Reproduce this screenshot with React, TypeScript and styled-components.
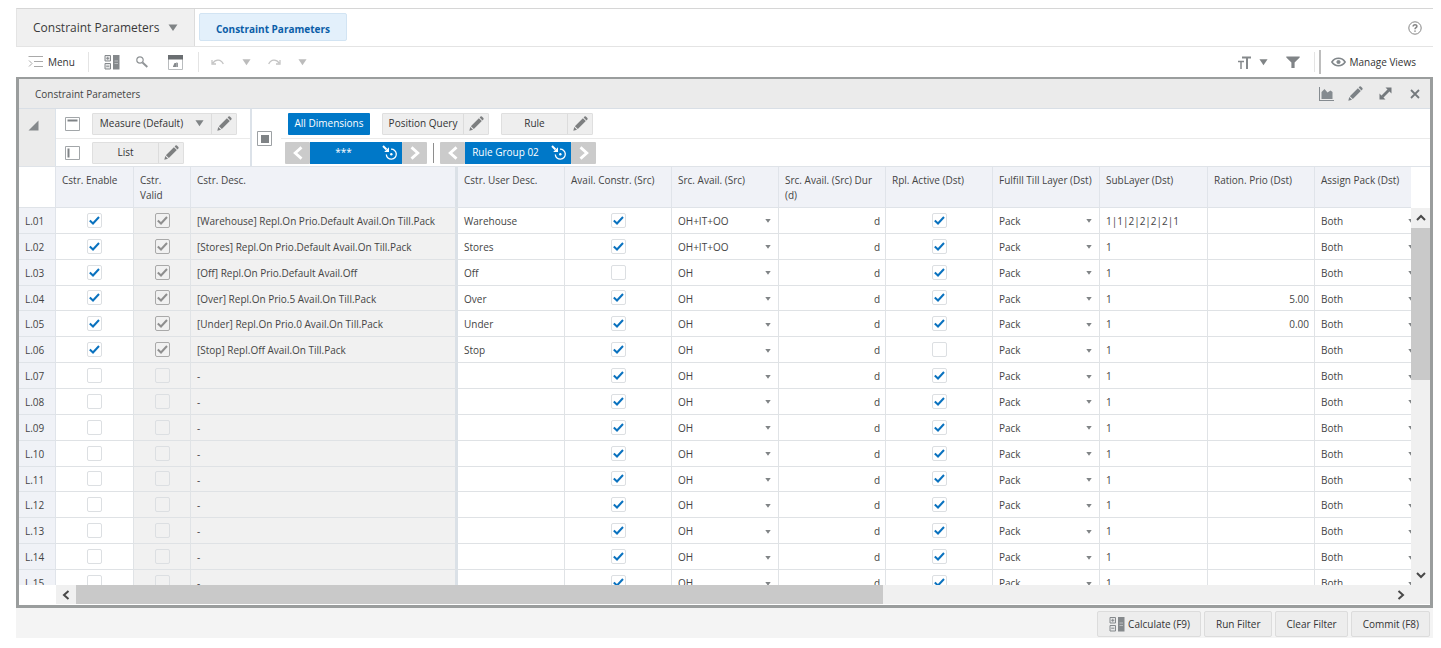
import React from "react";
import styled, { createGlobalStyle, css } from "styled-components";

const GlobalStyle = createGlobalStyle`
  *, *::before, *::after { box-sizing: border-box; }
  body {
    margin: 0;
    background: #fff;
    color: #444;
    font-family: "Open Sans", "Noto Sans", "Liberation Sans", sans-serif;
    font-size: 10px;
    line-height: 15px;
  }
  button, input, select { font: inherit; color: inherit; margin: 0; }
  button { border: 0; padding: 0; background: none; cursor: pointer; white-space: nowrap; }
  svg { display: block; flex: none; }
`;

const Page = styled.div`
  display: flex;
  flex-direction: column;
  height: 100vh;
  min-height: 400px;
  padding: 8px 8px 10px 16px;
`;

/* ---------- header ---------- */

const Header = styled.header`
  display: flex;
  flex: none;
  height: 39px;
  border-top: 1px solid #d6d6d6;
  border-bottom: 1px solid #e4e4e4;
  border-left: 1px solid #e4e4e4;
`;

const WorkspaceButton = styled.button`
  display: flex;
  align-items: center;
  gap: 9px;
  width: 178px;
  padding-left: 16px;
  background: #f0f0f0;
  border-right: 1px solid #dcdcdc;
  font-size: 12px;
  color: #3a3a3a;
`;

const TabLink = styled.a`
  display: flex;
  align-items: center;
  justify-content: center;
  width: 148px;
  height: 28px;
  margin: 4px 0 0 4px;
  padding-top: 4px;
  background: #e3f0fb;
  border: 1px solid #d2e4f3;
  border-radius: 2px;
  color: #0b5ea8;
  font-weight: 700;
  text-decoration: none;
`;

const HelpButton = styled.button`
  align-self: center;
  margin-left: auto;
  padding-right: 11px;
  color: #7d7d7d;
`;

/* ---------- toolbar ---------- */

const Toolbar = styled.div`
  display: flex;
  align-items: center;
  flex: none;
  height: 30px;
  padding: 0 17px 0 12px;
  color: #333;
`;

const ToolButton = styled.button<{ $gap?: number; $color?: string }>`
  display: flex;
  align-items: center;
  gap: 4px;
  margin-right: ${(p) => p.$gap ?? 0}px;
  color: ${(p) => p.$color ?? "inherit"};
`;

const Divider = styled.span<{ $strong?: boolean; $gap: number }>`
  width: ${(p) => (p.$strong ? 2 : 1)}px;
  height: ${(p) => (p.$strong ? 24 : 20)}px;
  margin-right: ${(p) => p.$gap}px;
  background: ${(p) => (p.$strong ? "#bdbdbd" : "#e4e4e4")};
`;

const Spacer = styled.span`
  flex: 1;
`;

/* ---------- panel ---------- */

const Panel = styled.section`
  display: flex;
  flex-direction: column;
  flex: 1;
  min-height: 0;
  border: 3px solid #9a9d9d;
  border-top-width: 2px;
`;

const PanelTitle = styled.div`
  display: flex;
  align-items: center;
  flex: none;
  height: 30px;
  padding: 0 10px 0 16px;
  background: #ebebeb;
  border-bottom: 1px solid #d9dfe6;
`;

const PanelHeading = styled.h2`
  flex: 1;
  margin: 0;
  padding-top: 2px;
  font-size: 10px;
  font-weight: 400;
`;

const PanelActions = styled.div`
  display: flex;
  align-items: center;
  gap: 14px;
  color: #7c8286;
`;

const Controls = styled.div`
  display: flex;
  flex: none;
  height: 58px;
  border-bottom: 1px solid #dfe3e8;
`;

const CollapseButton = styled.button`
  display: flex;
  align-items: flex-start;
  width: 37px;
  padding: 11px 0 0 9px;
  background: #ebebeb;
  border-right: 1px solid #dce3ea;
`;

const AxisGroup = styled.div`
  display: grid;
  grid-template-rows: 30px 27px;
  width: 196px;
  border-right: 2px solid #dce2e9;
`;

const AxisRow = styled.div`
  display: flex;
  align-items: center;
  gap: 12px;
  padding-left: 9px;

  &:first-child { border-bottom: 1px solid #eaeaea; }
`;

const SliceIcon = styled.div`
  display: flex;
  align-items: center;
  width: 29px;
  padding: 1px 0 0 5px;
`;

const SliceGroup = styled.div`
  display: grid;
  grid-template-rows: 30px 27px;
  flex: 1;
`;

const SliceRow = styled.div<{ $inset: number }>`
  display: flex;
  align-items: center;
  padding-left: ${(p) => p.$inset}px;

  &:first-child { gap: 12px; border-bottom: 1px solid #eaeaea; }
`;

const SplitButton = styled.div`
  display: flex;
  height: 22px;
  background: #eeeeee;
  border: 1px solid #dfdfdf;
  border-radius: 1px;
  color: #333;
`;

const SplitMain = styled.button<{ $width: number }>`
  display: flex;
  align-items: center;
  justify-content: center;
  gap: 12px;
  width: ${(p) => p.$width}px;
`;

const SplitEdit = styled.button`
  display: flex;
  align-items: center;
  justify-content: center;
  width: 25px;
  border-left: 1px solid #dcdcdc;
  color: #7d7f80;
`;

const PrimaryButton = styled.button`
  width: 82px;
  height: 22px;
  background: #0078c8;
  border-radius: 1px;
  color: #fff;
`;

const Stepper = styled.div`
  display: flex;
  height: 22px;
`;

const StepButton = styled.button`
  display: flex;
  align-items: center;
  justify-content: center;
  width: 25px;
  background: #cbcbcb;
  border-radius: 1px;
  color: #fff;
`;

const StepValue = styled.button<{ $width: number }>`
  display: flex;
  align-items: center;
  gap: 11px;
  width: ${(p) => p.$width}px;
  padding: 0 4px 0 6px;
  background: #0078c8;
  color: #fff;
`;

const StepLabel = styled.span`
  flex: 1;
  text-align: center;
`;

const StepSeparator = styled.span`
  width: 1px;
  height: 20px;
  margin: 0 6px;
  background: #8e8e8e;
`;

/* ---------- grid ---------- */

const GridArea = styled.div`
  display: grid;
  grid-template-columns: minmax(0, 1fr) 19px;
  grid-template-rows: minmax(0, 1fr) 20px;
  flex: 1;
  min-height: 0;
`;

const Viewport = styled.div`
  overflow: hidden;
`;

const Table = styled.table`
  width: 1403px;
  min-width: 100%;
  height: 429px;
  table-layout: fixed;
  border-collapse: separate;
  border-spacing: 0;
`;

const HeadRow = styled.tr`
  height: 41px;
`;

const frozenEdge = css`
  border-right: 3px solid #dbe1e7;
`;

const HeadCell = styled.th<{ $edge?: boolean }>`
  height: 41px;
  padding: 6px 6px 4px;
  background: #f0f2f7;
  border-right: 1px solid #e0e4ea;
  border-bottom: 1px solid #dfe3e8;
  font-weight: 400;
  text-align: left;
  vertical-align: top;
  ${(p) => p.$edge && frozenEdge}
`;

const CornerCell = styled.td`
  border-right: 1px solid #e0e4ea;
  border-bottom: 1px solid #dfe3e8;
`;

const RowHead = styled.th`
  padding: 2px 0 0 6px;
  background: #f0f2f7;
  border-right: 1px solid #e0e4ea;
  border-bottom: 1px solid #dfe3e8;
  font-weight: 400;
  text-align: left;
`;

const Cell = styled.td<{ $readOnly?: boolean; $edge?: boolean; $align?: "right" | "center" }>`
  padding: ${(p) => (p.$align === "center" ? "0 6px 1px" : "2px 5px 0 6px")};
  background: ${(p) => (p.$readOnly ? "#f1f1f1" : "#fff")};
  border-right: 1px solid #e0e3e6;
  border-bottom: 1px solid #dfe2e5;
  text-align: ${(p) => p.$align ?? "left"};
  white-space: nowrap;
  ${(p) => p.$edge && frozenEdge}
`;

const CheckWrap = styled.label`
  display: inline-grid;
  width: 15px;
  height: 15px;
  vertical-align: middle;

  > * { grid-area: 1 / 1; }
  > svg { place-self: center; pointer-events: none; }
`;

const CheckInput = styled.input<{ $readOnly?: boolean }>`
  appearance: none;
  width: 15px;
  height: 15px;
  background: ${(p) => (p.$readOnly ? "transparent" : "#fff")};
  border: 1px solid ${(p) => (p.$readOnly && p.checked ? "#a9a9a9" : "#dcdfe2")};
  border-radius: 2px;
`;

const SelectWrap = styled.label`
  display: flex;
  align-items: center;
  height: 20px;
  padding-right: 2px;
`;

const Select = styled.select`
  appearance: none;
  flex: 1;
  min-width: 0;
  padding: 0;
  border: 0;
  background: none;
  color: #444;
`;

/* ---------- scrollbars ---------- */

const VerticalBar = styled.div`
  display: flex;
  flex-direction: column;
  margin-top: 41px;
  background: #f0f0f0;
`;

const HorizontalRow = styled.div`
  display: flex;
  padding-left: 37px;
`;

const HorizontalBar = styled.div`
  display: flex;
  flex: 1;
  height: 19px;
  background: #f0f0f0;
`;

const ScrollButton = styled.button`
  display: flex;
  align-items: center;
  justify-content: center;
  flex: none;
  width: 20px;
  height: 20px;
  color: #484848;
`;

const Track = styled.div<{ $vertical?: boolean }>`
  display: flex;
  flex: 1;
  flex-direction: ${(p) => (p.$vertical ? "column" : "row")};
`;

const Thumb = styled.div<{ $share: number }>`
  flex: 0 0 ${(p) => p.$share}%;
  background: #c9c9c9;
`;

const ScrollCorner = styled.div`
  background: #f0f0f0;
  height: 19px;
`;

/* ---------- footer ---------- */

const Footer = styled.footer`
  display: flex;
  align-items: center;
  justify-content: flex-end;
  flex: none;
  gap: 3px;
  height: 30px;
  padding: 2px 3px 0 0;
  background: #f4f4f4;
`;

const FooterButton = styled.button`
  display: flex;
  align-items: center;
  gap: 3px;
  height: 26px;
  padding: 1px 10px 0 11px;
  background: #ededed;
  border: 1px solid #dcdcdc;
  border-radius: 2px;
  color: #333;
`;

/* ---------- icons ---------- */

const Caret = ({ size = 9, color = "#808486" }: { size?: number; color?: string }) => (
  <svg width={size} height={size} viewBox="0 0 10 10" fill={color}>
    <path d="M0.5 1.500h9L5 8z" />
  </svg>
);

const Pencil = () => (
  <svg width="15" height="15" viewBox="0 0 15 15" fill="currentColor">
    <path d="M0.3 14.700l1-3.700 2.700 2.700z" />
    <path d="M1.900 10.200L9.900 2.200l2.900 2.900-8 8z" />
    <path d="M10.600 1.500l.9-.9q.7-.6 1.400 0l1.500 1.500q.6.7 0 1.400l-.9.900z" />
  </svg>
);

const MenuIcon = () => (
  <svg width="16" height="14" viewBox="0 0 16 14" fill="none" stroke="#a9a9a9">
    <path d="M0.5 1.5H15M6 6.5h9M6 11.5h9" />
    <path d="M1 5.5l3 3-3 3" />
  </svg>
);

const CalcIcon = () => (
  <svg width="16" height="15" viewBox="0 0 16 15">
    <path d="M1 0.500h5.500v5.500H1zM1 8.500h5.500v5.500H1z" fill="#e6e7e8" stroke="#85898c" />
    <path d="M3.750 1.800v3M2.200 3.300h3.100M2.200 11.200h3.100" stroke="#85898c" />
    <path d="M9 0h6.500v14.500H9z" fill="#85898c" />
    <path d="M10.500 5.500h3.500v1h-3.500zM10.500 8h3.500v1h-3.500z" fill="#b9bcbe" />
  </svg>
);

const SearchIcon = () => (
  <svg width="12" height="12" viewBox="0 0 12 12" fill="none" stroke="#909497">
    <circle cx="4" cy="4" r="3.200" strokeWidth="1.200" />
    <path d="M6.500 6.500L11.300 11" strokeWidth="1.900" />
  </svg>
);

const WindowIcon = () => (
  <svg width="15" height="15" viewBox="0 0 15 15">
    <path d="M0.5 0.5h14v14H0.5z" fill="#fff" stroke="#b9bcbe" />
    <path d="M0 0h15v4.500H0z" fill="#6a6e71" />
    <path d="M5 11.500l1.500-3.500h3.500v4H5z" fill="#85898c" />
    <path d="M8 7.500h1.500v4.500H8z" fill="#a4a7a9" />
  </svg>
);

const UndoIcon = ({ flip }: { flip?: boolean }) => (
  <svg width="13" height="8" viewBox="0 0 13 8" fill="none" stroke="#c4c4c4" strokeWidth="1.300">
    {flip ? (
      <path d="M0.700 6C3 1 8.500 1 11 5M12 2V6H8" />
    ) : (
      <path d="M12.300 6C10 1 4.500 1 2 5M1 2V6H5" />
    )}
  </svg>
);

const TextSizeIcon = () => (
  <svg width="13" height="13" viewBox="0 0 13 13" fill="none" stroke="#85898c">
    <path d="M4 1.500h9M9 1v12" strokeWidth="2" />
    <path d="M0 5.500h6M3 5v8" strokeWidth="1.500" />
  </svg>
);

const FunnelIcon = () => (
  <svg width="14" height="13" viewBox="0 0 14 13" fill="#808487">
    <path d="M0.300 0.500h13.400v1L8.600 6.500v5.500H5.400V6.500L0.300 1.500z" />
  </svg>
);

const EyeIcon = () => (
  <svg width="15" height="10" viewBox="0 0 15 10" fill="none" stroke="#80868a">
    <path d="M0.900 5C4 0 11 0 14.100 5 11 10 4 10 0.900 5z" strokeWidth="1.600" />
    <circle cx="7.500" cy="5" r="1.600" fill="#80868a" />
  </svg>
);

const HelpIcon = () => (
  <svg width="14" height="14" viewBox="0 0 14 14" fill="none" stroke="#858585">
    <circle cx="7" cy="7" r="6.200" />
    <path d="M5.100 5.500C5.200 3 9 3.100 8.900 5.400 8.800 6.700 7 6.700 7 8.300M7 9.400v1.400" strokeWidth="1.500" />
  </svg>
);

const ChartIcon = () => (
  <svg width="15" height="14" viewBox="0 0 15 14" fill="#858b90">
    <path d="M0 0h1v13h14v1H0z" />
    <path d="M2.500 12V5l3-3L8.500 5.500 11.500 3.500 13.500 5v7z" />
  </svg>
);

const ExpandIcon = () => (
  <svg width="13" height="13" viewBox="0 0 13 13" fill="#74797d">
    <path d="M6.500 0.500h6v6zM6.500 12.500h-6v-6z" />
    <path d="M2.300 8.700L8.700 2.300l2 2L4.300 10.700z" />
  </svg>
);

const CloseIcon = () => (
  <svg width="10" height="10" viewBox="0 0 10 10" stroke="#74797d" strokeWidth="1.800">
    <path d="M1 1l8 8M9 1L1 9" />
  </svg>
);

const ColumnAxisIcon = () => (
  <svg width="15" height="14" viewBox="0 0 15 14" fill="none" stroke="#a2a6a9">
    <path d="M0.5 0.5h14v13H0.5z" />
    <path d="M2.500 3.500h10" stroke="#7f8386" strokeWidth="2" />
  </svg>
);

const RowAxisIcon = () => (
  <svg width="15" height="14" viewBox="0 0 15 14" fill="none" stroke="#a2a6a9">
    <path d="M0.5 0.5h14v13H0.5z" />
    <path d="M3.500 2.500v9" stroke="#7f8386" strokeWidth="2" />
  </svg>
);

const PageAxisIcon = () => (
  <svg width="15" height="15" viewBox="0 0 15 15">
    <path d="M0.5 0.5h14v14H0.5z" fill="#fff" stroke="#9da1a4" />
    <path d="M4 4h8v8H4z" fill="#7f8386" />
  </svg>
);

const TargetIcon = () => (
  <svg width="16" height="16" viewBox="0 0 16 16" fill="none" stroke="#fff">
    <path d="M9 4.200A5 5 0 1 1 4.300 9.500" strokeWidth="1.300" />
    <circle cx="9.300" cy="9.300" r="1.200" fill="#fff" stroke="none" />
    <path d="M1 1l3.500 3.500" strokeWidth="2" />
    <path d="M7 2.200V7H2.200z" fill="#fff" stroke="none" />
  </svg>
);

const Chevron = ({
  dir,
  size = 10,
  weight = 2,
}: {
  dir: "left" | "right" | "up" | "down";
  size?: number;
  weight?: number;
}) => {
  const paths = {
    left: "M7.500 1L3 5l4.500 4",
    right: "M2.500 1L7 5 2.500 9",
    up: "M1 7l4-4 4 4",
    down: "M1 3l4 4 4-4",
  };
  return (
    <svg width={size} height={size} viewBox="0 0 10 10" fill="none" stroke="currentColor" strokeWidth={weight}>
      <path d={paths[dir]} />
    </svg>
  );
};

const Tick = ({ color }: { color: string }) => (
  <svg width="13" height="13" viewBox="0 0 13 13" fill="none" stroke={color} strokeWidth="2">
    <path d="M1.800 6.500L5 9.500l6-6.500" />
  </svg>
);

/* ---------- data ---------- */

interface Row {
  id: string;
  enabled: boolean;
  desc: string;
  userDesc: string;
  availConstr: boolean;
  srcAvail: string;
  active: boolean;
  subLayer: string;
  prio: string;
}

const blankRow = (n: number): Row => ({
  id: `L.${String(n).padStart(2, "0")}`,
  enabled: false,
  desc: "-",
  userDesc: "",
  availConstr: true,
  srcAvail: "OH",
  active: true,
  subLayer: "1",
  prio: "",
});

const filled: Partial<Row>[] = [
  { desc: "[Warehouse] Repl.On Prio.Default Avail.On Till.Pack", userDesc: "Warehouse", srcAvail: "OH+IT+OO", subLayer: "1|1|2|2|2|2|1" },
  { desc: "[Stores] Repl.On Prio.Default Avail.On Till.Pack", userDesc: "Stores", srcAvail: "OH+IT+OO" },
  { desc: "[Off] Repl.On Prio.Default Avail.Off", userDesc: "Off", availConstr: false },
  { desc: "[Over] Repl.On Prio.5 Avail.On Till.Pack", userDesc: "Over", prio: "5.00" },
  { desc: "[Under] Repl.On Prio.0 Avail.On Till.Pack", userDesc: "Under", prio: "0.00" },
  { desc: "[Stop] Repl.Off Avail.On Till.Pack", userDesc: "Stop", active: false },
];

const rows: Row[] = Array.from({ length: 15 }, (_, i) => ({
  ...blankRow(i + 1),
  ...(filled[i] ? { enabled: true, ...filled[i] } : {}),
}));

const columns = [
  { label: "Cstr. Enable", width: 78 },
  { label: "Cstr. Valid", width: 57 },
  { label: "Cstr. Desc.", width: 267, edge: true },
  { label: "Cstr. User Desc.", width: 107 },
  { label: "Avail. Constr. (Src)", width: 107 },
  { label: "Src. Avail. (Src)", width: 107 },
  { label: "Src. Avail. (Src) Dur (d)", width: 107 },
  { label: "Rpl. Active (Dst)", width: 107 },
  { label: "Fulfill Till Layer (Dst)", width: 107 },
  { label: "SubLayer (Dst)", width: 108 },
  { label: "Ration. Prio (Dst)", width: 107 },
  { label: "Assign Pack (Dst)", width: 107 },
];

/* ---------- composed parts ---------- */

const CheckBox = ({ checked, readOnly, label }: { checked: boolean; readOnly?: boolean; label: string }) => (
  <CheckWrap>
    <CheckInput type="checkbox" checked={checked} readOnly $readOnly={readOnly} disabled={readOnly} aria-label={label} />
    {checked && <Tick color={readOnly ? "#8f8f8f" : "#0a72bf"} />}
  </CheckWrap>
);

const CellSelect = ({ value, label }: { value: string; label: string }) => (
  <SelectWrap>
    <Select defaultValue={value} aria-label={label}>
      <option>{value}</option>
    </Select>
    <Caret size={6} />
  </SelectWrap>
);

const EditableButton = ({ label, width, caret }: { label: string; width: number; caret?: boolean }) => (
  <SplitButton>
    <SplitMain $width={width}>
      {label}
      {caret && <Caret />}
    </SplitMain>
    <SplitEdit aria-label={`Edit ${label}`}>
      <Pencil />
    </SplitEdit>
  </SplitButton>
);

const DimensionStepper = ({ label, width }: { label: string; width: number }) => (
  <Stepper>
    <StepButton aria-label="Previous">
      <Chevron dir="left" size={14} />
    </StepButton>
    <StepValue $width={width}>
      <StepLabel>{label}</StepLabel>
      <TargetIcon />
    </StepValue>
    <StepButton aria-label="Next">
      <Chevron dir="right" size={14} />
    </StepButton>
  </Stepper>
);

export default function App() {
  return (
    <>
      <GlobalStyle />
      <Page>
        <Header>
          <WorkspaceButton>
            Constraint Parameters
            <Caret size={10} />
          </WorkspaceButton>
          <TabLink href="#constraint-parameters">Constraint Parameters</TabLink>
          <HelpButton aria-label="Help">
            <HelpIcon />
          </HelpButton>
        </Header>

        <Toolbar>
          <ToolButton $gap={13}>
            <MenuIcon />
            Menu
          </ToolButton>
          <Divider $gap={15} />
          <ToolButton $gap={16} aria-label="Calculate">
            <CalcIcon />
          </ToolButton>
          <ToolButton $gap={20} aria-label="Find">
            <SearchIcon />
          </ToolButton>
          <ToolButton $gap={15} aria-label="Window">
            <WindowIcon />
          </ToolButton>
          <Divider $gap={12} />
          <ToolButton $gap={18} aria-label="Undo">
            <UndoIcon />
          </ToolButton>
          <ToolButton $gap={17} aria-label="Undo history">
            <Caret color="#bcbcbc" />
          </ToolButton>
          <ToolButton $gap={17} aria-label="Redo">
            <UndoIcon flip />
          </ToolButton>
          <ToolButton aria-label="Redo history">
            <Caret color="#bcbcbc" />
          </ToolButton>
          <Spacer />
          <ToolButton $gap={8} aria-label="Text size">
            <TextSizeIcon />
          </ToolButton>
          <ToolButton $gap={18} aria-label="Text size options">
            <Caret />
          </ToolButton>
          <ToolButton $gap={14} aria-label="Filter">
            <FunnelIcon />
          </ToolButton>
          <Divider $gap={4} />
          <Divider $strong $gap={10} />
          <ToolButton>
            <EyeIcon />
            Manage Views
          </ToolButton>
        </Toolbar>

        <Panel>
          <PanelTitle>
            <PanelHeading>Constraint Parameters</PanelHeading>
            <PanelActions>
              <ToolButton aria-label="Chart">
                <ChartIcon />
              </ToolButton>
              <ToolButton aria-label="Edit" $gap={2}>
                <Pencil />
              </ToolButton>
              <ToolButton aria-label="Maximize" $gap={4}>
                <ExpandIcon />
              </ToolButton>
              <ToolButton aria-label="Close">
                <CloseIcon />
              </ToolButton>
            </PanelActions>
          </PanelTitle>

          <Controls>
            <CollapseButton aria-label="Collapse">
              <svg width="11" height="11" viewBox="0 0 11 11" fill="#85898c">
                <path d="M10.500 0.500v10H0.500z" />
              </svg>
            </CollapseButton>
            <AxisGroup>
              <AxisRow>
                <ColumnAxisIcon />
                <EditableButton label="Measure (Default)" width={118} caret />
              </AxisRow>
              <AxisRow>
                <RowAxisIcon />
                <EditableButton label="List" width={65} />
              </AxisRow>
            </AxisGroup>
            <SliceIcon>
              <PageAxisIcon />
            </SliceIcon>
            <SliceGroup>
              <SliceRow $inset={7}>
                <PrimaryButton>All Dimensions</PrimaryButton>
                <EditableButton label="Position Query" width={80} />
                <EditableButton label="Rule" width={65} />
              </SliceRow>
              <SliceRow $inset={4}>
                <DimensionStepper label="***" width={92} />
                <StepSeparator />
                <DimensionStepper label="Rule Group 02" width={106} />
              </SliceRow>
            </SliceGroup>
          </Controls>

          <GridArea>
            <Viewport>
              <Table>
                <colgroup>
                  <col width={37} />
                  {columns.map((c) => (
                    <col key={c.label} width={c.width} />
                  ))}
                </colgroup>
                <thead>
                  <HeadRow>
                    <CornerCell />
                    {columns.map((c) => (
                      <HeadCell key={c.label} scope="col" $edge={c.edge}>
                        {c.label}
                      </HeadCell>
                    ))}
                  </HeadRow>
                </thead>
                <tbody>
                  {rows.map((r) => (
                    <tr key={r.id}>
                      <RowHead scope="row">{r.id}</RowHead>
                      <Cell $align="center">
                        <CheckBox checked={r.enabled} label={`${r.id} enable`} />
                      </Cell>
                      <Cell $align="center" $readOnly>
                        <CheckBox checked={r.enabled} readOnly label={`${r.id} valid`} />
                      </Cell>
                      <Cell $readOnly $edge>{r.desc}</Cell>
                      <Cell>{r.userDesc}</Cell>
                      <Cell $align="center">
                        <CheckBox checked={r.availConstr} label={`${r.id} available constraint`} />
                      </Cell>
                      <Cell>
                        <CellSelect value={r.srcAvail} label={`${r.id} source availability`} />
                      </Cell>
                      <Cell $align="right">d</Cell>
                      <Cell $align="center">
                        <CheckBox checked={r.active} label={`${r.id} active`} />
                      </Cell>
                      <Cell>
                        <CellSelect value="Pack" label={`${r.id} fulfill till layer`} />
                      </Cell>
                      <Cell>{r.subLayer}</Cell>
                      <Cell $align="right">{r.prio}</Cell>
                      <Cell>
                        <CellSelect value="Both" label={`${r.id} assign pack`} />
                      </Cell>
                    </tr>
                  ))}
                </tbody>
              </Table>
            </Viewport>
            <VerticalBar>
              <ScrollButton aria-label="Scroll up">
                <Chevron dir="up" />
              </ScrollButton>
              <Track $vertical>
                <Thumb $share={45} />
              </Track>
              <ScrollButton aria-label="Scroll down">
                <Chevron dir="down" />
              </ScrollButton>
            </VerticalBar>
            <HorizontalRow>
              <HorizontalBar>
                <ScrollButton aria-label="Scroll left">
                  <Chevron dir="left" />
                </ScrollButton>
                <Track>
                  <Thumb $share={61.4} />
                </Track>
                <ScrollButton aria-label="Scroll right">
                  <Chevron dir="right" />
                </ScrollButton>
              </HorizontalBar>
            </HorizontalRow>
            <ScrollCorner />
          </GridArea>
        </Panel>

        <Footer>
          <FooterButton>
            <CalcIcon />
            Calculate (F9)
          </FooterButton>
          <FooterButton>Run Filter</FooterButton>
          <FooterButton>Clear Filter</FooterButton>
          <FooterButton>Commit (F8)</FooterButton>
        </Footer>
      </Page>
    </>
  );
}
